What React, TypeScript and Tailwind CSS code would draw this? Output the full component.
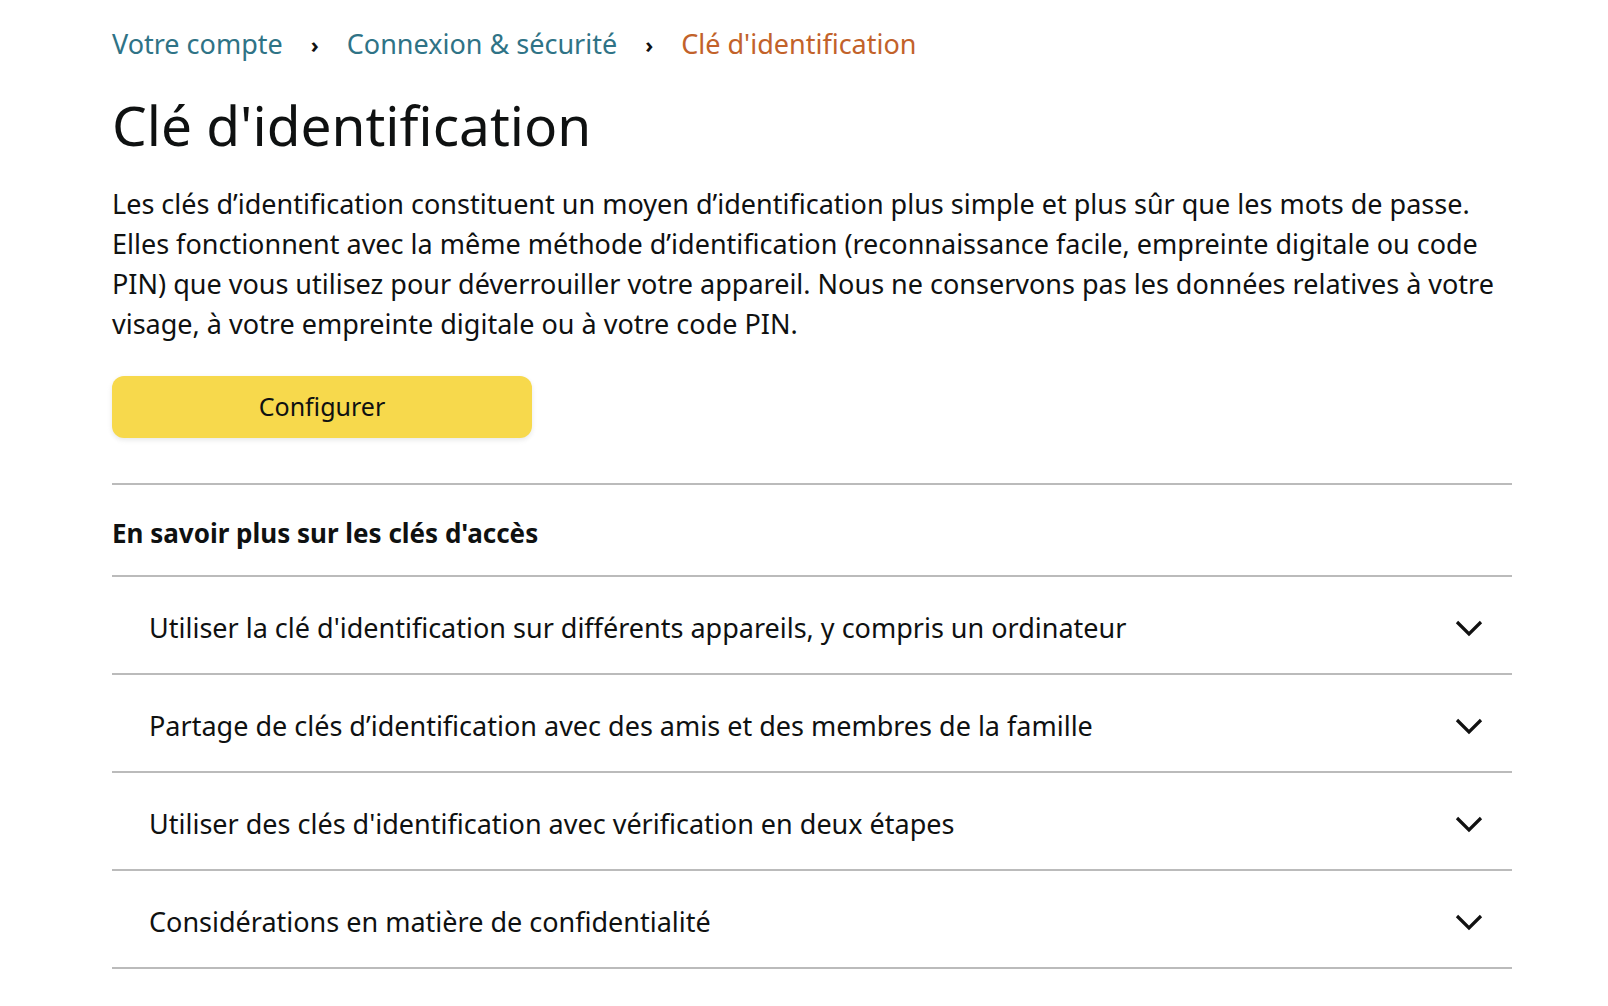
import React from 'react';

const faqItems = [
  "Utiliser la clé d'identification sur différents appareils, y compris un ordinateur",
  "Partage de clés d’identification avec des amis et des membres de la famille",
  "Utiliser des clés d'identification avec vérification en deux étapes",
  'Considérations en matière de confidentialité',
];

const Chevron: React.FC = () => (
  <svg width="28" height="17" viewBox="0 0 28 17" fill="none">
    <polyline points="2,2 14,14 26,2" stroke="#111111" strokeWidth="3.2" strokeLinejoin="miter" />
  </svg>
);

const App: React.FC = () => {
  return (
    <div className="min-h-screen bg-white text-[#0f1111] font-['Noto_Sans',sans-serif]">
      <div className="ml-[112px] w-[1400px] pt-[24px]">
        {/* breadcrumb */}
        <nav className="flex items-center h-[40px] text-[27px] leading-[40px]">
          <a className="text-[#2f7386]">Votre compte</a>
          <span className="mx-[28px] text-[22px] font-bold text-[#111]">›</span>
          <a className="text-[#2f7386]">Connexion &amp; sécurité</a>
          <span className="mx-[28px] text-[22px] font-bold text-[#111]">›</span>
          <span className="text-[#c2622a]">Clé d'identification</span>
        </nav>

        <h1 className="mt-[29px] text-[55px] leading-[64px] font-normal">Clé d'identification</h1>

        <p className="mt-[27px] text-[27px] leading-[40px]">
          Les clés d’identification constituent un moyen d’identification plus simple et plus sûr que les mots de passe.
          Elles fonctionnent avec la même méthode d’identification (reconnaissance facile, empreinte digitale ou code
          PIN) que vous utilisez pour déverrouiller votre appareil. Nous ne conservons pas les données relatives à votre
          visage, à votre empreinte digitale ou à votre code PIN.
        </p>

        <button className="mt-[32px] w-[420px] h-[62px] rounded-[12px] bg-[#f7d94c] text-[25px] shadow-[0_2px_5px_0_rgba(213,217,217,0.6)]">
          Configurer
        </button>

        <div className="mt-[45px] border-t-2 border-[#bbbbbb]">
          <div className="h-[92px] pt-[6px] flex items-center border-b-2 border-[#bbbbbb]">
            <h2 className="text-[26px] font-bold">En savoir plus sur les clés d'accès</h2>
          </div>
          {faqItems.map((item) => (
            <div
              key={item}
              className="h-[98px] pt-[6px] flex items-center justify-between pl-[37px] pr-[29px] border-b-2 border-[#bbbbbb]"
            >
              <span className="text-[27px]">{item}</span>
              <Chevron />
            </div>
          ))}
        </div>
      </div>
    </div>
  );
};

export default App;
